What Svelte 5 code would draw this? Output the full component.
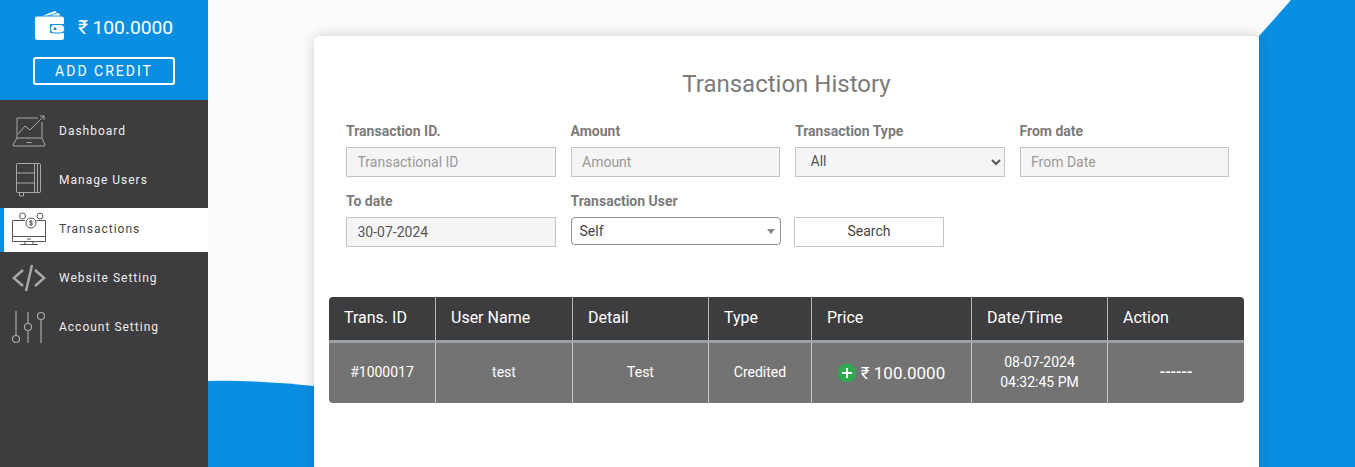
<script>
  const menu = [
    { label: 'Dashboard', icon: 'dash' },
    { label: 'Manage Users', icon: 'book' },
    { label: 'Transactions', icon: 'money', active: true },
    { label: 'Website Setting', icon: 'code' },
    { label: 'Account Setting', icon: 'sliders' }
  ];
  const columns = [
    { title: 'Trans. ID', width: 107 },
    { title: 'User Name', width: 137 },
    { title: 'Detail', width: 136 },
    { title: 'Type', width: 103 },
    { title: 'Price', width: 160 },
    { title: 'Date/Time', width: 136 },
    { title: 'Action', width: 136 }
  ];
</script>

<div class="page">
  <aside class="sidebar">
    <div class="wallet">
      <div class="balance">
        <svg class="wallet-icon" viewBox="0 0 30 29" width="30" height="29">
          <path d="M8 4.500 L20 0 L22 1.500 L13 4.500Z M15 4.500 L23.500 2 L25.500 4.500Z" fill="#fff" />
          <path d="M2 5.500 H27 Q29 5.500 29 8 V13 H15 V22 H29 V26.500 Q29 29 27 29 H2.500 Q0 29 0 26.500 V7.500 Q0 5.500 2 5.500Z" fill="#fff" />
          <rect x="15.500" y="13.500" width="14" height="8.500" rx="3.500" fill="#fff" stroke="#0a8ee2" />
          <circle cx="20" cy="17.700" r="1.500" fill="#0a8ee2" />
        </svg>
        <span class="amount">₹ 100.0000</span>
      </div>
      <button class="add-credit">ADD CREDIT</button>
    </div>
    <nav class="menu">
      {#each menu as item}
        <a class="menu-item" class:active={item.active} href="#top">
          <span class="menu-icon">
            {#if item.icon === 'dash'}
              <svg viewBox="0 0 34 32" width="34" height="32" fill="none" stroke="currentColor" stroke-width="1">
                <path d="M30 7 V23 H5 V3 H26" />
                <path d="M5 23 L1 30 Q1 31 2 31 H32 Q33 31 33 30 L30 23" />
                <path d="M14.500 27.500 H19.500" />
                <path d="M6 19 L13 11 L18 15 L32 1 M28 1 H32 V5" />
              </svg>
            {:else if item.icon === 'book'}
              <svg viewBox="0 0 34 34" width="34" height="34" fill="none" stroke="currentColor" stroke-width="1">
                <rect x="4.500" y="0.500" width="24" height="29" rx="1" />
                <path d="M22.500 0.500 V29.500 M25.500 0.500 V29.500 M4.500 10 H22.500 M4.500 20 H22.500 M7.500 29.500 V33 H11.500 V29.500" />
              </svg>
            {:else if item.icon === 'money'}
              <svg viewBox="0 0 34 33" width="34" height="33" fill="none" stroke="currentColor" stroke-width="1">
                <path d="M13 8.500 H0.500 V29.500 H33.500 V8.500 H24.500 M0.500 24.500 H33.500" />
                <circle cx="10.500" cy="4" r="3" />
                <circle cx="19" cy="11" r="5" />
                <circle cx="28" cy="4" r="3" />
                <path d="M19 8 V14 M20.800 9.500 Q19 8.300 17.500 9.500 Q17 11 19 11 Q21 11.200 20.500 12.500 Q19 13.700 17.200 12.500" stroke-width="0.900" />
                <path d="M13 29.500 V32 M21 29.500 V32 M8 32.500 H26 M15 27 H19" />
              </svg>
            {:else if item.icon === 'code'}
              <svg viewBox="0 0 34 28" width="34" height="28" fill="none" stroke="currentColor" stroke-width="2.500">
                <path d="M11 6 L1.800 14 L11 22 M23 6 L32.200 14 L23 22 M20 1 L14 27" />
              </svg>
            {:else}
              <svg viewBox="0 0 34 34" width="34" height="34" fill="none" stroke="currentColor" stroke-width="1.200">
                <path d="M4 1 V25 M16 2 V13 M16 21 V33 M29 10 V33" />
                <circle cx="4" cy="29" r="3.500" />
                <circle cx="16" cy="17" r="3.500" />
                <circle cx="29" cy="6" r="3.500" />
              </svg>
            {/if}
          </span>
          <span>{item.label}</span>
        </a>
      {/each}
    </nav>
  </aside>

  <main class="content">
    <svg class="backdrop" viewBox="0 0 1147 467" width="1147" height="467" aria-hidden="true">
      <path d="M1051 36 L1083 0 H1147 V467 H1051Z" fill="#0a8ee2" />
      <path d="M0 381 Q50 380 106 386 V467 H0Z" fill="#0a8ee2" />
    </svg>

    <section class="card">
      <h1>Transaction History</h1>
      <form class="filters" on:submit|preventDefault>
        <label class="field">
          <span>Transaction ID.</span>
          <input type="text" placeholder="Transactional ID" />
        </label>
        <label class="field">
          <span>Amount</span>
          <input type="text" placeholder="Amount" />
        </label>
        <label class="field">
          <span>Transaction Type</span>
          <select class="type-select">
            <option>All</option>
          </select>
        </label>
        <label class="field">
          <span>From date</span>
          <input type="text" placeholder="From Date" />
        </label>
        <label class="field">
          <span>To date</span>
          <input type="text" value="30-07-2024" />
        </label>
        <label class="field">
          <span>Transaction User</span>
          <span class="user-select">
            <select>
              <option>Self</option>
            </select>
            <i class="caret"></i>
          </span>
        </label>
        <div class="search-cell">
          <button type="submit" class="search">Search</button>
        </div>
      </form>

      <table class="history">
        <colgroup>
          {#each columns as col}
            <col style="width: {col.width}px" />
          {/each}
        </colgroup>
        <thead>
          <tr>
            {#each columns as col}
              <th>{col.title}</th>
            {/each}
          </tr>
        </thead>
        <tbody>
          <tr>
            <td>#1000017</td>
            <td>test</td>
            <td>Test</td>
            <td>Credited</td>
            <td class="price-cell">
              <span class="price">
                <svg viewBox="0 0 22 22" width="20" height="20">
                  <circle cx="11" cy="11" r="10.500" fill="#2fa84f" />
                  <path d="M11 5.500 V16.500 M5.500 11 H16.500" stroke="#fff" stroke-width="2.200" />
                </svg>
                ₹ 100.0000
              </span>
            </td>
            <td class="date">08-07-2024<br />04:32:45 PM</td>
            <td class="action">------</td>
          </tr>
        </tbody>
      </table>
    </section>
  </main>
</div>

<style>
  :global(body) {
    margin: 0;
    font-family: Roboto, "Liberation Sans", sans-serif;
    overflow: hidden;
  }

  .page {
    display: flex;
    height: 467px;
    overflow: hidden;
    background: #fbfbfd;
  }

  .sidebar {
    width: 208px;
    flex: none;
    background: #3d3c3f;
  }

  .wallet {
    height: 100px;
    box-sizing: border-box;
    padding-top: 11px;
    background: #0a8ee2;
    display: flex;
    flex-direction: column;
    align-items: center;
  }

  .balance {
    display: flex;
    align-items: center;
    gap: 13px;
    height: 31px;
    color: #fff;
    font-size: 19.2px;
  }

  .wallet-icon {
    margin-bottom: 2px;
  }

  .amount {
    padding-top: 2px;
  }

  .add-credit {
    margin-top: 15px;
    width: 142px;
    height: 28px;
    padding: 0;
    border: 2px solid #fff;
    border-radius: 3px;
    background: transparent;
    color: #fff;
    font: 400 14px Roboto, sans-serif;
    letter-spacing: 2px;
  }

  .menu {
    padding-top: 10px;
    display: flex;
    flex-direction: column;
    gap: 5px;
  }

  .menu-item {
    height: 44px;
    box-sizing: border-box;
    display: flex;
    align-items: center;
    padding: 0 0 3px 12px;
    gap: 13px;
    color: #eee;
    font-size: 12px;
    letter-spacing: 1px;
    text-decoration: none;
  }

  .menu-item.active {
    background: #fff;
    color: #444;
    border-left: 4px solid #0a8ee2;
    padding-left: 8px;
  }

  .menu-icon {
    width: 34px;
    height: 34px;
    display: flex;
    align-items: center;
    justify-content: center;
    color: #a8a8a8;
  }

  .active .menu-icon {
    color: #555;
  }

  .content {
    position: relative;
    flex: 1;
    min-width: 0;
    padding: 36px 96px 0 106px;
  }

  .backdrop {
    position: absolute;
    top: 0;
    left: 0;
  }

  .card {
    position: relative;
    height: 460px;
    box-sizing: border-box;
    padding: 0 15px;
    border-radius: 6px;
    background: #fff;
    box-shadow: 0 0 14px rgba(0, 0, 0, 0.18);
  }

  h1 {
    margin: 0;
    padding-top: 32px;
    height: 77px;
    box-sizing: border-box;
    text-align: center;
    color: #7b7b7b;
    font-size: 24px;
    font-weight: 400;
    line-height: 32px;
  }

  .filters {
    margin: 0 15px 0 17px;
    padding-top: 9px;
    display: grid;
    grid-template-columns: repeat(4, 209.5px);
    column-gap: 15px;
    row-gap: 15px;
  }

  .field {
    display: flex;
    flex-direction: column;
    font-size: 14px;
  }

  .field > span:first-child {
    height: 18px;
    line-height: 18px;
    color: #7b7b7b;
    font-weight: 700;
    margin-bottom: 7px;
  }

  input,
  .type-select {
    height: 30px;
    width: 100%;
    box-sizing: border-box;
    border: 1px solid #c4c4c4;
    border-radius: 0;
    background: #f5f5f5;
    padding: 0 10.5px;
    color: #555;
    font: 400 14px Roboto, sans-serif;
    outline: none;
  }

  input::placeholder {
    color: #999;
    opacity: 1;
  }

  .type-select {
    padding-top: 0;
    padding-bottom: 2px;
  }

  .user-select {
    position: relative;
    display: block;
    height: 28px;
    margin-right: -1px;
  }

  .user-select select {
    appearance: none;
    width: 100%;
    height: 28px;
    box-sizing: border-box;
    border: 1px solid #8f8f8f;
    border-radius: 4px;
    background: #fff;
    padding: 0 8px;
    color: #444;
    font: 400 14px Roboto, sans-serif;
  }

  .caret {
    position: absolute;
    right: 6px;
    top: 12px;
    border-style: solid;
    border-width: 5px 4px 0;
    border-color: #888 transparent transparent;
  }

  .search-cell {
    padding-top: 25px;
    margin-left: -1px;
  }

  .search {
    width: 150px;
    height: 30px;
    border: 1px solid #c4c4c4;
    background: #fff;
    color: #444;
    font: 400 14px Roboto, sans-serif;
    padding: 0 0 2px;
  }

  .history {
    margin-top: 50px;
    width: 915px;
    table-layout: fixed;
    border-collapse: separate;
    border-spacing: 0;
    border-radius: 4px;
    overflow: hidden;
    color: #fff;
  }

  th {
    height: 46px;
    box-sizing: border-box;
    padding: 0 15px 2px;
    background: #3d3c3f;
    border-bottom: 3px solid #9aa0a6;
    border-right: 1px solid #b5b5b5;
    text-align: left;
    font-size: 16px;
    font-weight: 400;
  }

  td {
    height: 60px;
    box-sizing: border-box;
    padding: 0 0 3px;
    background: #737373;
    border-right: 1px solid #c8c8c8;
    text-align: center;
    font-size: 14px;
    line-height: 20px;
  }

  th:last-child,
  td:last-child {
    border-right: 0;
  }

  .price-cell {
    padding-bottom: 1px;
  }

  .price {
    display: inline-flex;
    align-items: center;
    gap: 4px;
    font-size: 17px;
    vertical-align: middle;
    margin-left: -1px;
  }

  .action {
    font-size: 16px;
    font-weight: 500;
  }
</style>
